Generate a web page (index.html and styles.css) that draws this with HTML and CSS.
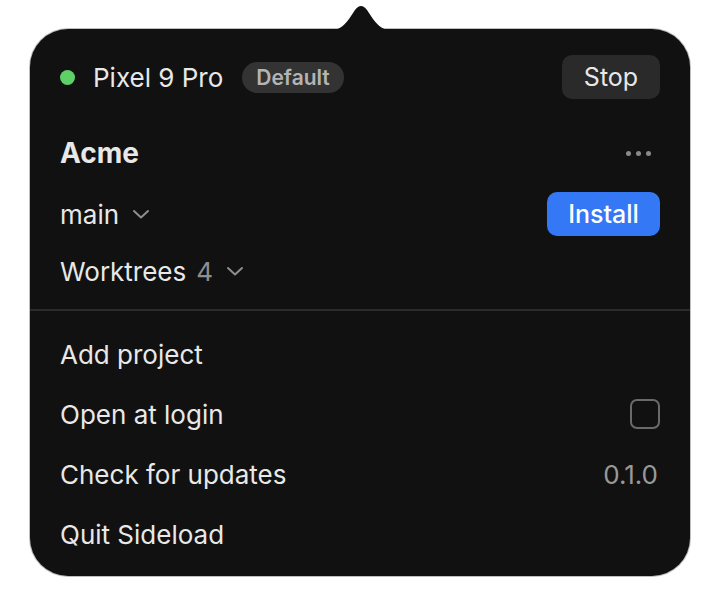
FILE: index.html
```html
<!DOCTYPE html>
<html lang="en">
<head>
    <meta charset="UTF-8">
    <meta name="viewport" content="width=device-width, initial-scale=1.0">
    <title>Sideload</title>
    <link rel="stylesheet" href="styles.css">
</head>
<body>
    <div class="popover">
        <svg class="notch" width="64" height="26" viewBox="0 0 64 26">
            <path d="M0 26 C10 26 14 23 20 15 L26 6 Q32 -2 38 6 L44 15 C50 23 54 26 64 26 Z" fill="#111111"/>
        </svg>

        <div class="row device-row">
            <span class="status-dot"></span>
            <span class="device-name">Pixel 9 Pro</span>
            <span class="badge">Default</span>
            <button class="btn btn-stop">Stop</button>
        </div>

        <div class="row project-row">
            <span class="project-name">Acme</span>
            <span class="more">
                <i></i><i></i><i></i>
            </span>
        </div>

        <div class="row branch-row">
            <span class="picker">main
                <svg class="chevron" width="18" height="10" viewBox="0 0 18 10"><path d="M2 2 L9 8.5 L16 2" fill="none" stroke="#8e8e8e" stroke-width="2" stroke-linecap="round" stroke-linejoin="round"/></svg>
            </span>
            <button class="btn btn-install">Install</button>
        </div>

        <div class="row worktree-row">
            <span class="picker">Worktrees <span class="count">4</span>
                <svg class="chevron" width="18" height="10" viewBox="0 0 18 10"><path d="M2 2 L9 8.5 L16 2" fill="none" stroke="#8e8e8e" stroke-width="2" stroke-linecap="round" stroke-linejoin="round"/></svg>
            </span>
        </div>

        <div class="divider"></div>

        <ul class="menu">
            <li>Add project</li>
            <li>Open at login <span class="checkbox"></span></li>
            <li>Check for updates <span class="version">0.1.0</span></li>
            <li>Quit Sideload</li>
        </ul>
    </div>
</body>
</html>
```

FILE: styles.css
```css
body {
    margin: 0;
    padding: 29px 30px;
    background: #ffffff;
    font-family: Inter, "Noto Sans", sans-serif;
}
.popover {
    position: relative;
    width: 660px;
    height: 547px;
    box-sizing: border-box;
    padding: 26px 30px 11px;
    background: #111111;
    border-radius: 38px;
    box-shadow: 0 0 0 1px rgba(0, 0, 0, 0.25);
    color: #e8e8e8;
    font-size: 26px;
}
.notch {
    position: absolute;
    top: -25px;
    left: 299px;
}
.row {
    display: flex;
    align-items: center;
    height: 44px;
}
.status-dot {
    width: 15px;
    height: 15px;
    border-radius: 50%;
    background: #5fd068;
    margin-right: 18px;
}
.device-name {
    margin-right: 19px;
}
.badge {
    background: #333333;
    color: #b4b4b4;
    font-size: 21px;
    font-weight: 600;
    line-height: 31px;
    padding: 0 14px;
    border-radius: 16px;
}
.btn {
    margin-left: auto;
    border: none;
    border-radius: 10px;
    font-family: inherit;
    font-size: 25px;
    height: 44px;
    padding: 0;
    cursor: pointer;
}
.btn-stop {
    background: #2a2a2a;
    color: #e8e8e8;
    width: 98px;
}
.btn-install {
    background: #3478f6;
    color: #ffffff;
    font-weight: 500;
    width: 113px;
}
.project-row {
    margin-top: 32px;
    justify-content: space-between;
}
.project-name {
    font-size: 28px;
    font-weight: 700;
}
.more {
    display: flex;
    gap: 5px;
    margin-right: 9px;
}
.more i {
    width: 5px;
    height: 5px;
    border-radius: 50%;
    background: #8a8a8a;
}
.branch-row {
    margin-top: 17px;
}
.worktree-row {
    margin-top: 13px;
}
.picker {
    display: flex;
    align-items: center;
}
.count {
    color: #8e8e8e;
    margin-left: 10px;
}
.chevron {
    margin-left: 13px;
}
.divider {
    height: 2px;
    background: #2c2c2c;
    margin: 16px -30px 13px;
}
.menu {
    list-style: none;
    margin: 0;
    padding: 0;
}
.menu li {
    display: flex;
    align-items: center;
    justify-content: space-between;
    height: 60px;
}
.checkbox {
    width: 26px;
    height: 26px;
    border: 2px solid #6a6a6a;
    border-radius: 7px;
}
.version {
    color: #999999;
    margin-right: 2px;
}
```
